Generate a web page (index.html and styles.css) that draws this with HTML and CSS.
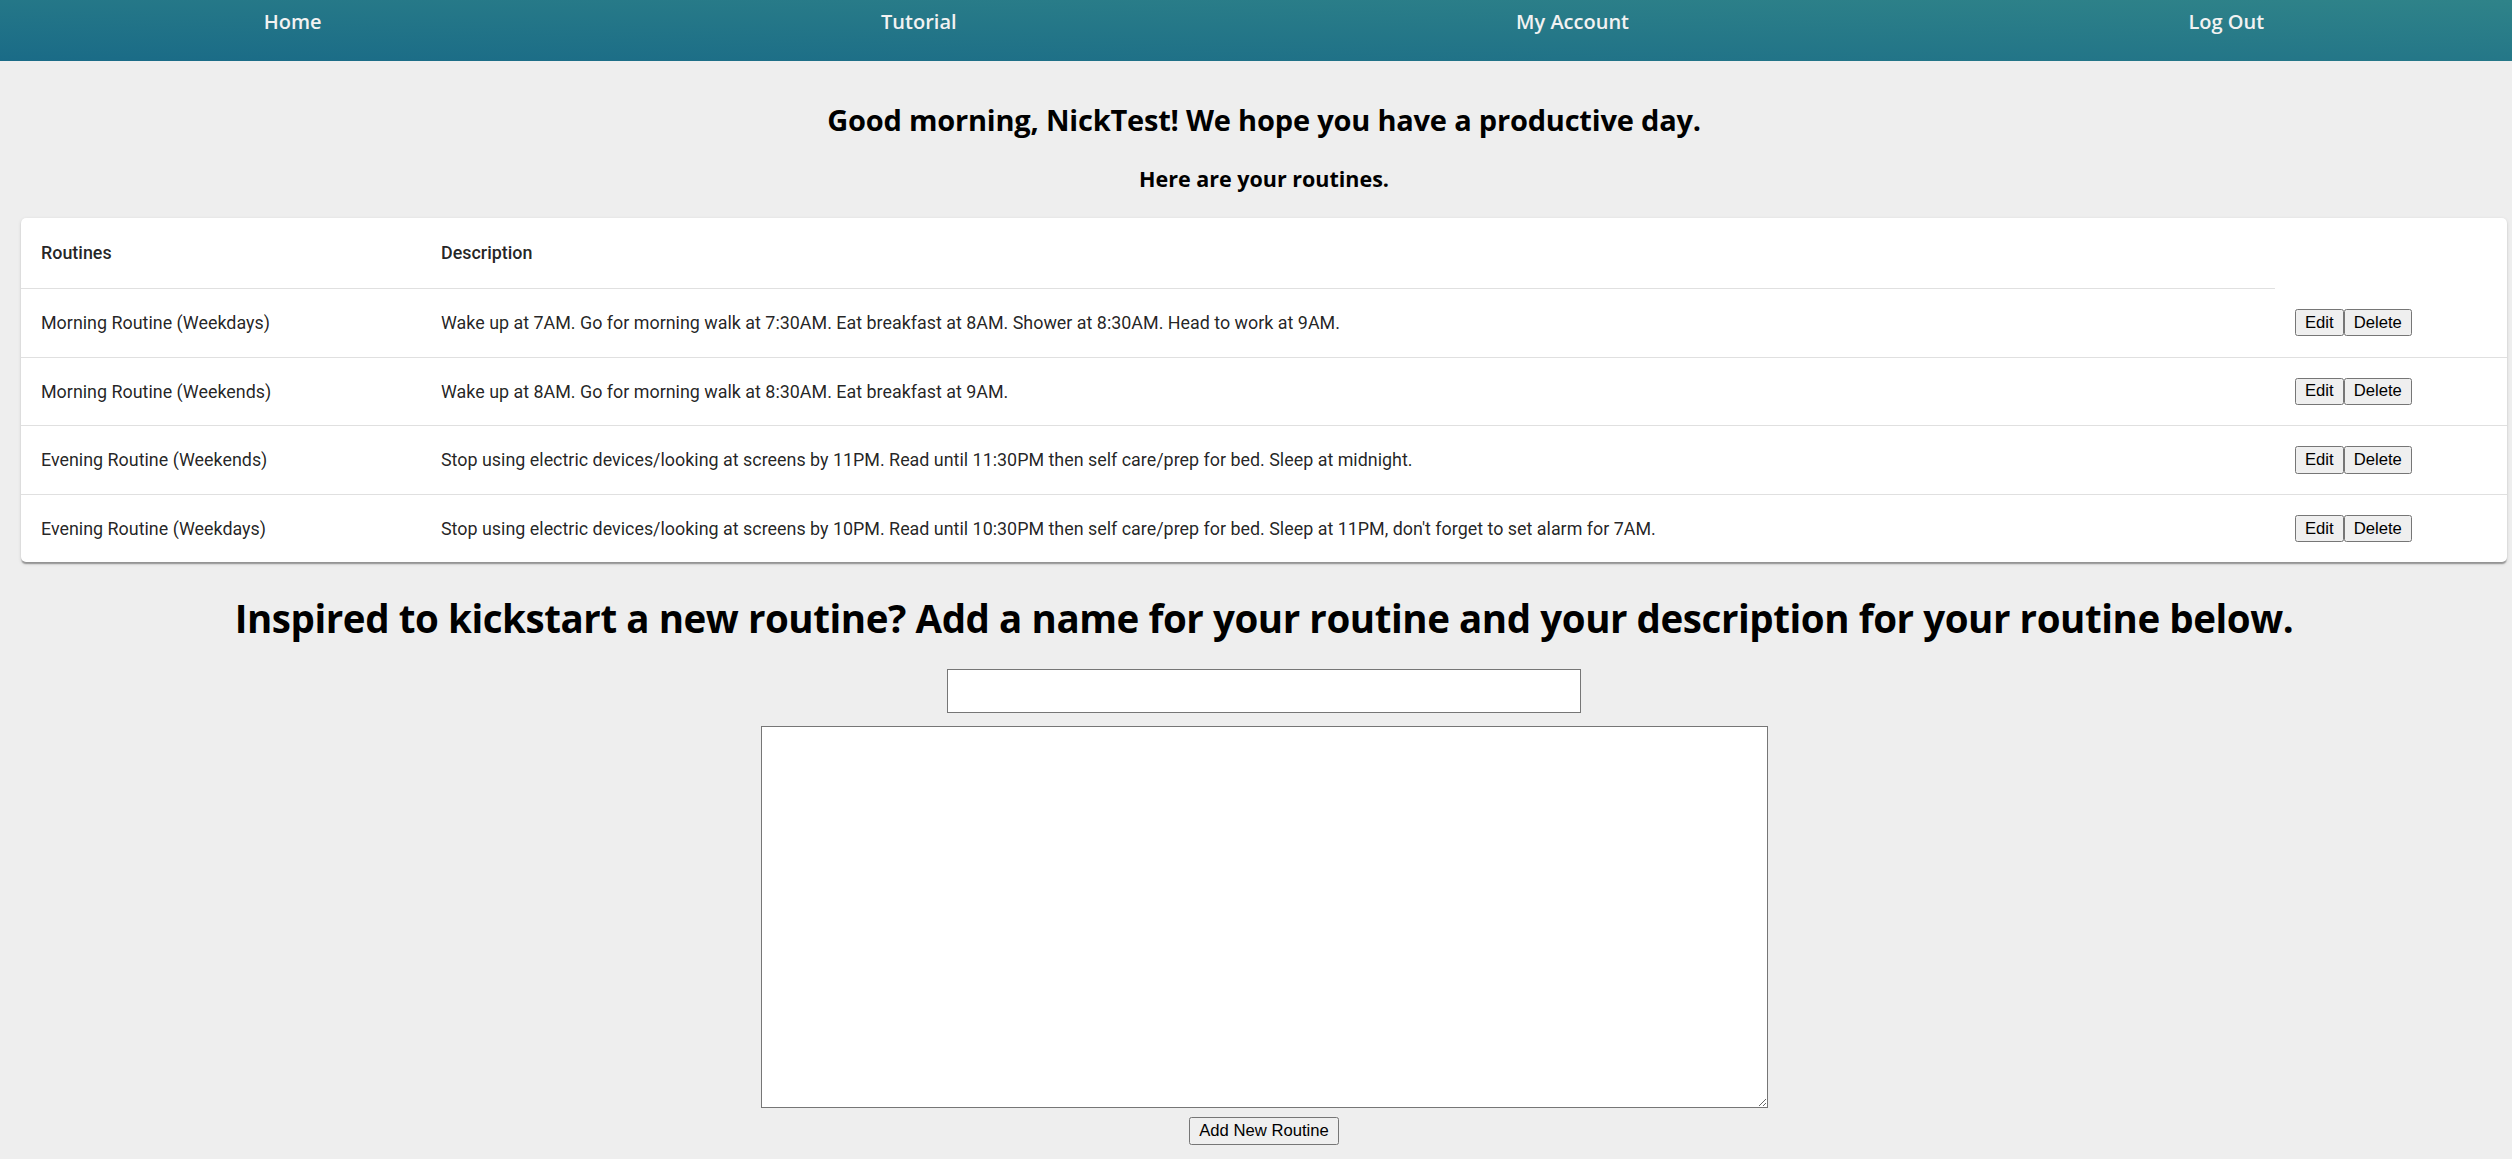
FILE: index.html
```html
<!DOCTYPE html>
<html lang="en">
<head>
<meta charset="utf-8">
<title>Routines</title>
<link rel="stylesheet" href="styles.css">
</head>
<body>
<nav class="topnav">
  <ul class="topnav-list">
    <li><a class="topnav-link" href="#">Home</a></li>
    <li><a class="topnav-link" href="#">Tutorial</a></li>
    <li><a class="topnav-link" href="#">My Account</a></li>
    <li><a class="topnav-link" href="#">Log Out</a></li>
  </ul>
</nav>
<main class="content">
  <h2 class="greeting">Good morning, NickTest! We hope you have a productive day.</h2>
  <h4 class="subgreeting">Here are your routines.</h4>
  <div class="card">
    <table class="routine-table">
      <colgroup>
        <col class="col-name">
        <col class="col-desc">
        <col class="col-actions">
      </colgroup>
      <thead>
        <tr>
          <th class="cell head-cell">Routines</th>
          <th class="cell head-cell">Description</th>
        </tr>
      </thead>
      <tbody>
        <tr class="body-row">
          <td class="cell">Morning Routine (Weekdays)</td>
          <td class="cell">Wake up at 7AM. Go for morning walk at 7:30AM. Eat breakfast at 8AM. Shower at 8:30AM. Head to work at 9AM.</td>
          <td class="cell action-cell"><button class="btn">Edit</button><button class="btn">Delete</button></td>
        </tr>
        <tr class="body-row">
          <td class="cell">Morning Routine (Weekends)</td>
          <td class="cell">Wake up at 8AM. Go for morning walk at 8:30AM. Eat breakfast at 9AM.</td>
          <td class="cell action-cell"><button class="btn">Edit</button><button class="btn">Delete</button></td>
        </tr>
        <tr class="body-row">
          <td class="cell">Evening Routine (Weekends)</td>
          <td class="cell">Stop using electric devices/looking at screens by 11PM. Read until 11:30PM then self care/prep for bed. Sleep at midnight.</td>
          <td class="cell action-cell"><button class="btn">Edit</button><button class="btn">Delete</button></td>
        </tr>
        <tr class="body-row last-row">
          <td class="cell">Evening Routine (Weekdays)</td>
          <td class="cell">Stop using electric devices/looking at screens by 10PM. Read until 10:30PM then self care/prep for bed. Sleep at 11PM, don't forget to set alarm for 7AM.</td>
          <td class="cell action-cell"><button class="btn">Edit</button><button class="btn">Delete</button></td>
        </tr>
      </tbody>
    </table>
  </div>
  <h1 class="prompt">Inspired to kickstart a new routine? Add a name for your routine and your description for your routine below.</h1>
  <form class="new-form">
    <input class="name-input" type="text">
    <textarea class="desc-input"></textarea>
    <button class="btn add-btn" type="button">Add New Routine</button>
  </form>
</main>
</body>
</html>
```

FILE: styles.css
```css
html, body {
  margin: 0;
  padding: 0;
}

body {
  background: #eeeeee;
  font-family: "Open Sans", "Liberation Sans", sans-serif;
  color: #000;
  overflow-x: hidden;
}

.topnav {
  height: 61px;
  background: linear-gradient(to top right, #1a6b87, #2f8389);
  overflow: hidden;
}

.topnav-list {
  list-style: none;
  display: flex;
  justify-content: space-around;
  margin: 0 -32px 0 -16px;
  padding: 8px 0 0;
}

.topnav-link {
  display: block;
  color: #f2f2f2;
  text-decoration: none;
  font-family: "Open Sans", sans-serif;
  font-weight: 600;
  font-size: 20px;
  line-height: 28px;
}

.content {
  padding: 0 5px 0 21px;
  text-align: center;
}

.greeting {
  margin: 39px 0 0;
  font-size: 29px;
  line-height: 40px;
  font-weight: 700;
  letter-spacing: -0.2px;
}

.subgreeting {
  margin: 25px 0 0;
  font-size: 21.5px;
  line-height: 28px;
  font-weight: 700;
}

.card {
  margin-top: 25px;
  background: #fff;
  border-radius: 5px;
  box-shadow: 0 2.5px 1.25px -1.25px rgba(0,0,0,0.2), 0 1.25px 1.25px 0 rgba(0,0,0,0.14), 0 1.25px 3.75px 0 rgba(0,0,0,0.12);
  overflow: hidden;
  text-align: left;
}

.routine-table {
  width: 100%;
  border-collapse: collapse;
  border-spacing: 0;
  table-layout: fixed;
}

.col-name { width: 400px; }
.col-desc { width: 1854px; }

.cell {
  font-family: Roboto, "Noto Sans", sans-serif;
  font-size: 17.9px;
  line-height: 25px;
  color: rgba(0,0,0,0.87);
  padding: 20px;
  text-align: left;
  vertical-align: middle;
  border-bottom: 1px solid #e0e0e0;
  white-space: nowrap;
}

.head-cell {
  font-weight: 500;
  line-height: 30px;
}

.body-row .cell {
  font-weight: 400;
  height: 27.6px;
}

.last-row .cell {
  border-bottom: none;
}

.action-cell {
  font-size: 0;
}

.btn {
  font-family: Arial, "Liberation Sans", sans-serif;
  font-size: 16.67px;
  line-height: 20px;
  height: 27.5px;
  padding: 1px 9px;
  background: #efefef;
  border: 1px solid #767676;
  border-radius: 2.5px;
  color: #000;
  vertical-align: middle;
}

.prompt {
  margin: 30px 0 0;
  font-size: 38.5px;
  line-height: 52px;
  font-weight: 700;
  letter-spacing: -0.43px;
}

.new-form {
  margin-top: 25px;
  display: flex;
  flex-direction: column;
  align-items: center;
}

.name-input {
  box-sizing: border-box;
  width: 634px;
  height: 44px;
  margin: 0;
  border: 1px solid #767676;
  background: #fff;
}

.desc-input {
  box-sizing: border-box;
  width: 1007px;
  height: 382px;
  margin: 13px 0 0;
  border: 1px solid #767676;
  background: #fff;
}

.add-btn {
  margin-top: 9px;
  padding: 1px 9px;
}
```
